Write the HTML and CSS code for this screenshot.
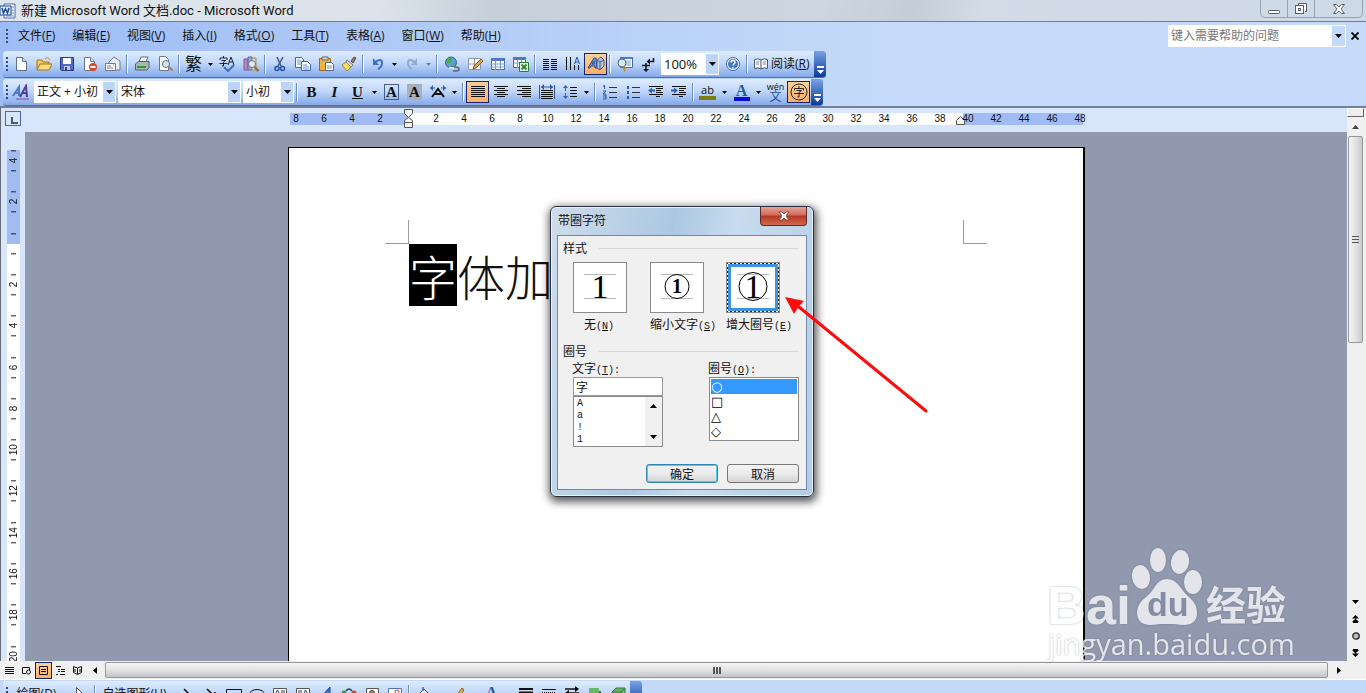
FILE: index.html
```
<!DOCTYPE html>
<html lang="zh-CN">
<head>
  <meta charset="UTF-8">
  <meta name="viewport" content="width=device-width, initial-scale=1.0">
  <title>新建 Microsoft Word 文档.doc - Microsoft Word</title>
  <link rel="stylesheet" href="styles.css">
</head>
<body>
  <svg class="defs" aria-hidden="true">
    <symbol id="caret" viewBox="0 0 7 4"><path d="M0 0h7L3.500 4z"/></symbol>
    <symbol id="chevron" viewBox="0 0 8 8"><path d="M1 0h7v2H1zM1 4h7L4.500 8z" fill="#fff"/></symbol>
  </svg>

  <header class="titlebar">
    <svg class="app-icon" width="16" height="16" viewBox="0 0 16 16"><path d="M4 1h11v14H4z" fill="#fff" stroke="#4a6da8"/><path d="M11 4h3M11 7h3M11 10h3M6 13h8" stroke="#6a8cc5"/><path d="M0 3h11v9H0z" fill="#dce8fa" stroke="#1d4a95"/><path d="M2 5l1.500 5L5.500 6l2 4L9 5" fill="none" stroke="#1d4a95" stroke-width="1.500"/></svg>
    <h1>新建 Microsoft Word 文档.doc - Microsoft Word</h1>
    <div class="win-buttons">
      <button aria-label="最小化"><svg width="14" height="14" viewBox="0 0 14 14"><rect x="1.500" y="8.500" width="11" height="3" rx="1" fill="#fff" stroke="#555e6b"/></svg></button>
      <button aria-label="还原"><svg width="14" height="14" viewBox="0 0 14 14"><path d="M4.500 3V1.500h8v8H11" fill="#fff" stroke="#555e6b"/><rect x="1.500" y="3.500" width="8" height="8" fill="#fff" stroke="#555e6b"/><rect x="4.500" y="6.500" width="2" height="2" fill="none" stroke="#555e6b"/></svg></button>
      <button class="win-close" aria-label="关闭"><svg width="14" height="14" viewBox="0 0 14 14"><path d="M1.500 2.500h3L7 5l2.500-2.500h3L9 7l3.500 4.500h-3L7 9l-2.500 2.500h-3L5 7z" fill="#fff" stroke="#555e6b"/></svg></button>
    </div>
  </header>

  <nav class="menubar">
    <span class="grip"></span>
    <button>文件(<u>F</u>)</button>
    <button>编辑(<u>E</u>)</button>
    <button>视图(<u>V</u>)</button>
    <button>插入(<u>I</u>)</button>
    <button>格式(<u>O</u>)</button>
    <button>工具(<u>T</u>)</button>
    <button>表格(<u>A</u>)</button>
    <button>窗口(<u>W</u>)</button>
    <button>帮助(<u>H</u>)</button>
    <div class="help-box">
      <input type="text" placeholder="键入需要帮助的问题" aria-label="键入需要帮助的问题">
      <button class="help-drop" aria-label="展开"><svg width="7" height="4"><use href="#caret"/></svg></button>
    </div>
    <button class="doc-close" aria-label="关闭窗口"><svg width="8" height="8" viewBox="0 0 8 8"><path d="M.5.5l7 7M7.500.5l-7 7" stroke="#000" stroke-width="1.800"/></svg></button>
  </nav>

  <section class="toolbars">
    <!-- 常用 -->
    <div class="toolbar">
      <span class="grip"></span>
      <button class="tb" aria-label="新建"><svg width="16" height="16" viewBox="0 0 16 16"><path d="M3.500 1.500h6l4 4v9h-10z" fill="#fff" stroke="#5b6f97"/><path d="M9.500 1.500v4h4" fill="#cfdcf2" stroke="#5b6f97"/></svg></button>
      <button class="tb" aria-label="打开"><svg width="16" height="16" viewBox="0 0 16 16"><path d="M1 14V4h5l1 2h6v3" fill="#f5c95c" stroke="#a67516"/><path d="M1 14l3-6h12l-3 6z" fill="#fbdc7d" stroke="#a67516"/><path d="M9 3q3-3 5 1" fill="none" stroke="#c58a1c"/></svg></button>
      <button class="tb" aria-label="保存"><svg width="16" height="16" viewBox="0 0 16 16"><path d="M1.500 1.500h13v13h-12l-1-1z" fill="#5566c4" stroke="#2c3788"/><path d="M4 2h8v6H4z" fill="#fff"/><path d="M5 10h6v4H5z" fill="#c8cee8"/><path d="M6 11h2v3H6z" fill="#2c3788"/></svg></button>
      <button class="tb" aria-label="权限"><svg width="16" height="16" viewBox="0 0 16 16"><path d="M2.500 1.500h6l4 4v9h-10z" fill="#fff" stroke="#6b7797"/><path d="M8.500 1.500v4h4" fill="#d5ddec" stroke="#6b7797"/><circle cx="11" cy="11" r="4" fill="#d94a28"/><path d="M8.500 11h5" stroke="#fff" stroke-width="2"/></svg></button>
      <button class="tb" aria-label="电子邮件"><svg width="16" height="16" viewBox="0 0 16 16"><path d="M4 6l5-5 6 4v9H4z" fill="#e8ecf4" stroke="#6f7b94"/><path d="M.5 7.500h10v7H.5z" fill="#fff" stroke="#6f7b94"/><path d="M2 10h4M2 12h6M8 9h1" stroke="#6f7b94"/></svg></button>
      <span class="sep"></span>
      <button class="tb" aria-label="打印"><svg width="16" height="16" viewBox="0 0 16 16"><path d="M5 6l2-5h7l-2 5z" fill="#fff" stroke="#56677d"/><path d="M1.500 8l3-2.500h10.500v6l-2 2.500H1.500z" fill="#a9b8b6" stroke="#4e605e"/><path d="M3 11h9" stroke="#2c9a35" stroke-width="2"/></svg></button>
      <button class="tb" aria-label="打印预览"><svg width="16" height="16" viewBox="0 0 16 16"><path d="M2.500.5h6l3 3v11h-9z" fill="#fff" stroke="#6b7797"/><circle cx="9" cy="8" r="3.500" fill="#cfe2f7" stroke="#66718a"/><path d="M11.500 10.500l4 4" stroke="#b9812f" stroke-width="2"/></svg></button>
      <span class="sep"></span>
      <button class="tb fan" aria-label="中文简繁转换">繁</button>
      <button class="drop" aria-label="更多"><svg width="5" height="3"><use href="#caret"/></svg></button>
      <button class="tb" aria-label="拼写和语法"><svg width="18" height="16" viewBox="0 0 18 16"><path d="M1 4V2h7v2M4.500 0v2M2.500 4.500h4L4.500 6v4H3M.5 7.500h8M9 9l3-8 3 8M10 6h4" fill="none" stroke="#20242e"/><path d="M5 11l4 4 6-6" fill="none" stroke="#3b6fc4" stroke-width="2"/></svg></button>
      <button class="tb" aria-label="信息检索"><svg width="16" height="16" viewBox="0 0 16 16"><path d="M1 3h4v11H1z" fill="#b987bd" stroke="#7c5990"/><path d="M5 1h4v13H5z" fill="#93a9e0" stroke="#5a6aa4"/><path d="M9 2h4v12H9z" fill="#ead9a0" stroke="#a08b50"/><circle cx="9" cy="8" r="3.500" fill="#e0ecfa" stroke="#66718a"/><path d="M11.500 11l4 4" stroke="#98652a" stroke-width="2"/></svg></button>
      <span class="sep"></span>
      <button class="tb" aria-label="剪切"><svg width="16" height="16" viewBox="0 0 16 16"><path d="M5 1l4 9M11 1L6 10" stroke="#3f5688" stroke-width="1.500"/><circle cx="5" cy="12.500" r="2" fill="none" stroke="#2451a5" stroke-width="1.500"/><circle cx="10.500" cy="12.500" r="2" fill="none" stroke="#2451a5" stroke-width="1.500"/></svg></button>
      <button class="tb" aria-label="复制"><svg width="16" height="16" viewBox="0 0 16 16"><path d="M.5 1.500h6l2 2v8h-8z" fill="#fff" stroke="#3e66b0"/><path d="M6.500 5.500h6l3 3v6h-9z" fill="#fff" stroke="#3e66b0"/><path d="M2 4h4M2 6h4M2 8h4M8 9h4M8 11h6M8 13h6" stroke="#6f92cf"/></svg></button>
      <button class="tb" aria-label="粘贴"><svg width="16" height="16" viewBox="0 0 16 16"><path d="M1.500 2.500h11v12h-11z" fill="#f0b33c" stroke="#9a6914"/><path d="M4 1h6v3H4z" fill="#d4d8e0" stroke="#666"/><path d="M7.500 6.500h6l2 2v6h-8z" fill="#fff" stroke="#53688f"/><path d="M9 10h5M9 12h5" stroke="#7b93bd"/></svg></button>
      <button class="tb" aria-label="格式刷"><svg width="16" height="16" viewBox="0 0 16 16"><path d="M10 5l3-4 2 1-3 5z" fill="#9a7b55" stroke="#5d4a35"/><path d="M6 4l6 5-2 2-5-5z" fill="#d5dbe8" stroke="#6d7890"/><path d="M5 6l5 5-4 4-5-6z" fill="#f4dd70" stroke="#a98a24"/></svg></button>
      <span class="sep"></span>
      <button class="tb" aria-label="撤消"><svg width="16" height="16" viewBox="0 0 16 16"><path d="M4 7q8-6 8 0 0 4-4 6" fill="none" stroke="#3c6fc9" stroke-width="2"/><path d="M3 2v7h6z" fill="#3c6fc9"/></svg></button>
      <button class="drop" aria-label="更多"><svg width="5" height="3"><use href="#caret"/></svg></button>
      <button class="tb" aria-label="恢复"><svg width="16" height="16" viewBox="0 0 16 16"><path d="M12 7q-8-6-8 0 0 4 4 6" fill="none" stroke="#93a9cf" stroke-width="2"/><path d="M13 2v7H7z" fill="#93a9cf"/></svg></button>
      <button class="drop dim" aria-label="更多"><svg width="5" height="3"><use href="#caret"/></svg></button>
      <span class="sep"></span>
      <button class="tb" aria-label="插入超链接"><svg width="16" height="16" viewBox="0 0 16 16"><circle cx="7" cy="6.500" r="5.500" fill="#5a9fdb" stroke="#32648e"/><path d="M4 2q4-1 4 2t-3 3-3-2zM8 8l4-2-1 4z" fill="#4caa4f"/><path d="M7 11h5q3 0 3 2t-3 2H9" fill="none" stroke="#5c6577" stroke-width="1.500"/><path d="M5 12h5" stroke="#dde3ee" stroke-width="2"/></svg></button>
      <button class="tb" aria-label="表格和边框"><svg width="16" height="16" viewBox="0 0 16 16"><path d="M1.500 2.500h12v11h-12z" fill="#fff" stroke="#8c97ae"/><path d="M1 8h13M7.500 2v12" stroke="#8c97ae"/><path d="M6 13l1-3 7-7 2 2-7 7z" fill="#e8a349" stroke="#8b5c20"/></svg></button>
      <button class="tb" aria-label="插入表格"><svg width="16" height="16" viewBox="0 0 16 16"><path d="M1.500 2.500h13v11h-13z" fill="#fff" stroke="#48689f"/><path d="M1 2h14v3H1z" fill="#4f7ac2"/><path d="M1 8h14M1 11h14M5.500 5v9M10.500 5v9" stroke="#7f9bca"/></svg></button>
      <button class="tb" aria-label="插入 Excel 工作表"><svg width="16" height="16" viewBox="0 0 16 16"><path d="M.5 1.500h12v10H.5z" fill="#fff" stroke="#48689f"/><path d="M0 1h13v3H0z" fill="#4f7ac2"/><path d="M1 7h11M4.500 4v8M8.500 4v8" stroke="#7f9bca"/><path d="M6.500 6.500h9v9h-9z" fill="#e6f3e3" stroke="#2b7a35"/><path d="M8.500 8.500l5 5M13.500 8.500l-5 5" stroke="#2b8a35" stroke-width="2"/></svg></button>
      <span class="sep"></span>
      <button class="tb" aria-label="分栏"><svg width="16" height="16" viewBox="0 0 16 16"><path d="M1 3.500h6M1 5.500h6M1 7.500h6M1 9.500h6M1 11.500h6M1 13.500h6M9 3.500h6M9 5.500h6M9 7.500h6M9 9.500h6M9 11.500h6M9 13.500h6" stroke="#111"/></svg></button>
      <button class="tb" aria-label="更改文字方向"><svg width="16" height="16" viewBox="0 0 16 16"><path d="M1.500 1v13M5.500 1v13M9.500 9v5M13.500 9v5" stroke="#111"/><path d="M9.500 8l2.500-7 2.500 7M10 6h4" fill="none" stroke="#2d5aa6"/></svg></button>
      <button class="tb active" aria-label="绘图"><svg width="18" height="16" viewBox="0 0 18 16"><path d="M1 12L7 2h2l1 10H8v-2H4l-1 2zM5 8h2V5z" fill="#6f9be0" stroke="#2c4a8c"/><path d="M10 4l4-3 3 3v6l-4 4-3-2z" fill="#b5c0dd" stroke="#4b5b86"/><path d="M10 4l3 2 4-2M13 6v7" fill="none" stroke="#4b5b86"/></svg></button>
      <span class="sep"></span>
      <button class="tb" aria-label="文档结构图"><svg width="16" height="16" viewBox="0 0 16 16"><path d="M3.500 1.500h12v10h-12z" fill="#fff" stroke="#48689f"/><path d="M3 1h13v2H3z" fill="#4f7ac2"/><path d="M9 5h5M9 7h5M9 9h5" stroke="#7f9bca"/><circle cx="5" cy="7" r="4" fill="#d6eaf5" stroke="#567"/><path d="M6 10l2 5" stroke="#b98b2f" stroke-width="2"/></svg></button>
      <button class="tb" aria-label="显示/隐藏编辑标记"><svg width="16" height="16" viewBox="0 0 16 16"><path d="M13.500 2v3.500H9M2 9.500h8M6 7v8" fill="none" stroke="#111" stroke-width="1.500"/><path d="M10 2.500v6L6.500 5.500zM3 13h6l-3 3z" fill="#111"/></svg></button>
      <span class="combo zoom">
        <select aria-label="显示比例"><option>100%</option></select>
        <span class="combo-arrow"><svg width="7" height="4"><use href="#caret"/></svg></span>
      </span>
      <button class="tb" aria-label="帮助"><svg width="16" height="16" viewBox="0 0 16 16"><circle cx="8" cy="8" r="6.500" fill="#fff" stroke="#33619f"/><circle cx="8" cy="8" r="5" fill="#3f77c9"/><path d="M6 6.500q0-2 2-2t2 1.800q0 1-1 1.700t-1 1.500M8 11v1.500" fill="none" stroke="#fff" stroke-width="1.500"/></svg></button>
      <span class="sep"></span>
      <button class="tb-read"><svg width="16" height="16" viewBox="0 0 16 16"><path d="M8 4Q5 2 1.500 3.500v9Q5 11 8 13q3-2 6.500-.5v-9Q11 2 8 4v9" fill="#f3f6fc" stroke="#4b5870"/><path d="M3 6h3M3 8h3M10 6h3M10 8h3" stroke="#8a93a8"/></svg><span>阅读(<u>R</u>)</span></button>
      <button class="tb-end" aria-label="工具栏选项"><svg width="8" height="8"><use href="#chevron"/></svg></button>
    </div>

    <!-- 格式 -->
    <div class="toolbar">
      <span class="grip"></span>
      <button class="tb" aria-label="格式窗格"><svg width="18" height="16" viewBox="0 0 18 16"><path d="M1 12l6-9v9M3 9h4" fill="none" stroke="#4d78c8" stroke-width="2"/><path d="M8 13l6-11 1 11M10 9h5" fill="none" stroke="#4d3f9c" stroke-width="2"/><path d="M4 15h13" stroke="#8e4fa0"/></svg></button>
      <span class="combo style">
        <select aria-label="样式"><option>正文 + 小初</option></select>
        <span class="combo-arrow"><svg width="7" height="4"><use href="#caret"/></svg></span>
      </span>
      <span class="combo font">
        <select aria-label="字体"><option>宋体</option></select>
        <span class="combo-arrow"><svg width="7" height="4"><use href="#caret"/></svg></span>
      </span>
      <span class="combo size">
        <select aria-label="字号"><option>小初</option></select>
        <span class="combo-arrow"><svg width="7" height="4"><use href="#caret"/></svg></span>
      </span>
      <span class="sep"></span>
      <button class="tb letter">B</button>
      <button class="tb letter italic">I</button>
      <button class="tb letter underline">U</button>
      <button class="drop" aria-label="更多"><svg width="5" height="3"><use href="#caret"/></svg></button>
      <button class="tb letter"><span class="boxed">A</span></button>
      <button class="tb letter"><span class="shaded">A</span></button>
      <button class="tb" aria-label="字符缩放"><svg width="16" height="16" viewBox="0 0 16 16"><path d="M2 13l6-8 6 8M5 10h6" fill="none" stroke="#111" stroke-width="2"/><path d="M0 4h5M11 4h5" stroke="#2d62b5"/><path d="M3 1L0 4l3 3zM13 1l3 3-3 3z" fill="#2d62b5"/></svg></button>
      <button class="drop" aria-label="更多"><svg width="5" height="3"><use href="#caret"/></svg></button>
      <span class="sep"></span>
      <button class="tb active" aria-label="两端对齐"><svg width="16" height="16" viewBox="0 0 16 16"><path d="M1 2.500h14M1 4.500h14M1 6.500h14M1 8.500h14M1 10.500h14M1 12.500h14" stroke="#111"/></svg></button>
      <button class="tb" aria-label="居中"><svg width="16" height="16" viewBox="0 0 16 16"><path d="M1 2.500h14M4 4.500h8M1 6.500h14M4 8.500h8M1 10.500h14M4 12.500h8" stroke="#111"/></svg></button>
      <button class="tb" aria-label="右对齐"><svg width="16" height="16" viewBox="0 0 16 16"><path d="M1 2.500h14M6 4.500h9M1 6.500h14M6 8.500h9M1 10.500h14M6 12.500h9" stroke="#111"/></svg></button>
      <button class="tb" aria-label="分散对齐"><svg width="16" height="16" viewBox="0 0 16 16"><path d="M.5 1v14M15.500 1v14M2 3h12" stroke="#2d5aa6"/><path d="M5 0L2 3l3 3zM11 0l3 3-3 3z" fill="#2d5aa6"/><path d="M2 6.500h12M2 8.500h12M2 10.500h12M2 12.500h12M2 14.500h12" stroke="#111"/></svg></button>
      <button class="tb" aria-label="行距"><svg width="16" height="16" viewBox="0 0 16 16"><path d="M3.500 3v4M3.500 9v4" stroke="#2d62b5"/><path d="M1 4l2.500-3L6 4zM1 12l2.500 3L6 12z" fill="#2d62b5"/><path d="M8 3.500h7M8 6.500h7M8 9.500h7M8 12.500h7" stroke="#111"/></svg></button>
      <button class="drop" aria-label="更多"><svg width="5" height="3"><use href="#caret"/></svg></button>
      <span class="sep"></span>
      <button class="tb" aria-label="编号"><svg width="16" height="16" viewBox="0 0 16 16"><path d="M2.500 1v4M1 2h1M1 7h3l-3 3h3M1 11h3v4H1M1 13h3" fill="none" stroke="#2d5aa6"/><path d="M7 3.500h8M7 8.500h8M7 13.500h8" stroke="#333"/></svg></button>
      <button class="tb" aria-label="项目符号"><svg width="16" height="16" viewBox="0 0 16 16"><path d="M2 2h2v3H2zM2 7h2v3H2zM2 12h2v3H2z" fill="#2d5aa6"/><path d="M7 3.500h8M7 8.500h8M7 13.500h8" stroke="#333"/></svg></button>
      <button class="tb" aria-label="减少缩进量"><svg width="16" height="16" viewBox="0 0 16 16"><path d="M1 2.500h14M8 4.500h7M8 6.500h5M8 8.500h7M1 10.500h14M8 12.500h4" stroke="#111"/><path d="M3 6.500h4" stroke="#2d62b5" stroke-width="2"/><path d="M4 3.500v6L0 6.500z" fill="#2d62b5"/></svg></button>
      <button class="tb" aria-label="增加缩进量"><svg width="16" height="16" viewBox="0 0 16 16"><path d="M1 2.500h14M8 4.500h7M8 6.500h5M8 8.500h7M1 10.500h14M8 12.500h4" stroke="#111"/><path d="M0 6.500h4" stroke="#2d62b5" stroke-width="2"/><path d="M3 3.500v6l4-3z" fill="#2d62b5"/></svg></button>
      <span class="sep"></span>
      <button class="tb marker"><span>ab</span></button>
      <button class="drop" aria-label="更多"><svg width="5" height="3"><use href="#caret"/></svg></button>
      <button class="tb font-color"><span>A</span></button>
      <button class="drop" aria-label="更多"><svg width="5" height="3"><use href="#caret"/></svg></button>
      <button class="tb pinyin"><span>wén</span><span class="wen">文</span></button>
      <button class="tb active" aria-label="带圈字符"><svg width="18" height="18" viewBox="0 0 18 18"><circle cx="9" cy="9" r="8" fill="none" stroke="#222"/><path d="M9 3v2M4.500 7.500v-2h9v2M6.500 7.500h5L9 9.500V14H7.500M4 10.500h10" fill="none" stroke="#222"/></svg></button>
      <button class="tb-end" aria-label="工具栏选项"><svg width="8" height="8"><use href="#chevron"/></svg></button>
    </div>
  </section>

  <main class="workspace">
    <div class="tab-corner"><span class="tab-mark"></span></div>
    <div class="ruler-h">
      <div class="ruler-scale">
        <span>8</span><span>6</span><span>4</span><span>2</span><span class="zero"><svg width="9" height="19" viewBox="0 0 9 19"><path d="M.5.5h8v4l-4 4-4-4zM.5 13.500v-2l4-3 4 3v2zM.5 13.500h8v5h-8z" fill="#f4f4f4" stroke="#555"/></svg></span>
        <span>2</span><span>4</span><span>6</span><span>8</span><span>10</span><span>12</span><span>14</span><span>16</span><span>18</span><span>20</span><span>22</span><span>24</span><span>26</span><span>28</span><span>30</span><span>32</span><span>34</span><span>36</span><span>38</span><span class="right-indent"><svg width="9" height="9" viewBox="0 0 9 9"><path d="M.5 8.500v-4l4-4 4 4v4z" fill="#f4f4f4" stroke="#555"/></svg>40</span><span>42</span><span>44</span><span>46</span><span>48</span>
      </div>
    </div>
    <div class="ruler-v">
      <div class="ruler-v-scale">
        <span>4</span><span>2</span><span></span><span>2</span><span>4</span><span>6</span><span>8</span><span>10</span><span>12</span><span>14</span><span>16</span><span>18</span><span>20</span>
      </div>
    </div>
    <div class="canvas">
      <article class="page">
        <div class="crop-marks"><span class="crop-left"></span><span class="crop-right"></span></div>
        <p class="doc-text"><mark>字</mark>体加</p>
      </article>
    </div>
    <div class="scroll-v">
      <span class="split"></span>
      <button aria-label="向上"><svg width="7" height="4" viewBox="0 0 7 4"><path d="M0 4h7L3.500 0z" fill="#444"/></svg></button>
      <span class="thumb-v"><i></i></span>
      <div class="scroll-nav">
        <button aria-label="向下"><svg width="7" height="4"><use href="#caret"/></svg></button>
        <button aria-label="前一页"><svg width="7" height="8" viewBox="0 0 7 8"><path d="M0 3.500h7L3.500 0zM0 7h7L3.500 3.500zM1 7h5v1H1z"/></svg></button>
        <button aria-label="选择浏览对象"><svg width="8" height="8" viewBox="0 0 8 8"><circle cx="4" cy="4" r="3.200" fill="#bbb" stroke="#222" stroke-width="1.300"/></svg></button>
        <button aria-label="下一页"><svg width="7" height="8" viewBox="0 0 7 8"><path d="M1 0h5v1H1zM0 1h7L3.500 4.500zM0 4.500h7L3.500 8z"/></svg></button>
      </div>
    </div>
  </main>

  <div class="scroll-h">
    <button class="view" aria-label="普通视图"><svg width="11" height="11" viewBox="0 0 11 11"><path d="M1 2.500h9M1 4.500h9M1 6.500h9M1 8.500h9" stroke="#111"/></svg></button>
    <button class="view" aria-label="Web 版式视图"><svg width="11" height="11" viewBox="0 0 11 11"><path d="M5 8.500H1.500v-6h7V5" fill="none" stroke="#111"/><circle cx="7.500" cy="7" r="2" fill="none" stroke="#111"/></svg></button>
    <button class="view active" aria-label="页面视图"><svg width="11" height="11" viewBox="0 0 11 11"><path d="M1.500 1.500h8v8h-8zM3 4.500h5M3 6.500h5" fill="none" stroke="#111"/></svg></button>
    <button class="view" aria-label="大纲视图"><svg width="11" height="11" viewBox="0 0 11 11"><path d="M1 1.500h5M3 4.500h2M6 4.500h4M3 6.500h2M6 6.500h4M1 9.500h2M5 9.500h5" stroke="#111"/></svg></button>
    <button class="view" aria-label="阅读版式"><svg width="11" height="11" viewBox="0 0 11 11"><path d="M5.500 3L1.500 1.500v6l4 2 4-2v-6zM5.500 3v6M3 4v3M8 4v3" fill="none" stroke="#111"/></svg></button>
    <button class="view" aria-label="向左"><svg width="4" height="7" viewBox="0 0 4 7"><path d="M4 0v7L0 3.500z"/></svg></button>
    <span class="thumb-h"><i></i></span>
    <button class="view" aria-label="向右"><svg width="4" height="7" viewBox="0 0 4 7"><path d="M0 0v7l4-3.500z"/></svg></button>
  </div>

  <!-- 绘图 -->
  <footer class="drawbar">
    <div class="toolbar">
      <span class="grip"></span>
      <button class="draw-menu"><span>绘图(<u>D</u>)</span><svg width="5" height="3"><use href="#caret"/></svg></button>
      <button class="tb" aria-label="选择对象"><svg width="16" height="16" viewBox="0 0 16 16"><path d="M3.500 1.500l8 8h-5l-3 3z" fill="#fff" stroke="#556"/></svg></button>
      <span class="sep"></span>
      <button class="draw-menu auto"><span>自选图形(<u>U</u>)</span><svg width="5" height="3"><use href="#caret"/></svg></button>
      <button class="tb" aria-label="直线"><svg width="16" height="16" viewBox="0 0 16 16"><path d="M4 3l10 10" stroke="#111" stroke-width="1.500"/></svg></button>
      <button class="tb" aria-label="箭头"><svg width="16" height="16" viewBox="0 0 16 16"><path d="M4 3l8 8M12 6v5H7" fill="none" stroke="#111" stroke-width="1.500"/></svg></button>
      <button class="tb" aria-label="矩形"><svg width="16" height="16" viewBox="0 0 16 16"><path d="M.5 3.500h15v10H.5z" fill="none" stroke="#111"/></svg></button>
      <button class="tb" aria-label="椭圆"><svg width="16" height="16" viewBox="0 0 16 16"><ellipse cx="8" cy="8.500" rx="7.500" ry="5" fill="none" stroke="#111"/></svg></button>
      <button class="tb" aria-label="文本框"><svg width="16" height="16" viewBox="0 0 16 16"><path d="M1.500 2.500h13v11h-13z" fill="#fff" stroke="#555"/><path d="M3 9l2.500-5L8 9M9 5h4M9 7h4" fill="none" stroke="#246"/></svg></button>
      <button class="tb" aria-label="竖排文本框"><svg width="16" height="16" viewBox="0 0 16 16"><path d="M1.500 2.500h13v11h-13z" fill="#fff" stroke="#555"/><path d="M8 9l2.500-5L13 9M4 4v8M6 4v8" fill="none" stroke="#246"/></svg></button>
      <button class="tb" aria-label="艺术字"><svg width="16" height="16" viewBox="0 0 16 16"><path d="M2 12L12 1v13h-3v-3H5z" fill="#3f71c9" stroke="#1f4690"/></svg></button>
      <button class="tb" aria-label="组织结构图"><svg width="16" height="16" viewBox="0 0 16 16"><path d="M5 5q3-4 6 0" fill="none" stroke="#345" stroke-width="1.500"/><circle cx="3" cy="7" r="2.500" fill="#389648"/><circle cx="13" cy="7" r="2.500" fill="#c04c38"/></svg></button>
      <button class="tb" aria-label="剪贴画"><svg width="16" height="16" viewBox="0 0 16 16"><path d="M2.500 2.500h12v11h-12z" fill="#fff" stroke="#555"/><circle cx="8" cy="7" r="2.500" fill="#9a8b6a" stroke="#543"/></svg></button>
      <button class="tb" aria-label="图片"><svg width="16" height="16" viewBox="0 0 16 16"><path d="M1.500 2.500h13v11h-13z" fill="#fff" stroke="#5374b5"/><circle cx="10" cy="6" r="2" fill="none" stroke="#c33"/><path d="M3 12l4-4 3 4z" fill="#c33"/></svg></button>
      <span class="sep"></span>
      <button class="tb" aria-label="填充颜色"><svg width="16" height="16" viewBox="0 0 16 16"><path d="M3 8l5-5 5 5-5 5z" fill="#e6ecf8" stroke="#445"/><path d="M7 5V1M13 8l2 4" stroke="#3567b8" stroke-width="1.500"/></svg></button>
      <button class="drop" aria-label="更多"><svg width="5" height="3"><use href="#caret"/></svg></button>
      <button class="tb" aria-label="线条颜色"><svg width="16" height="16" viewBox="0 0 16 16"><path d="M6 10l6-8 2 2-6 8z" fill="#e9b947" stroke="#765b20"/><path d="M2 12q2-4 5-1" fill="none" stroke="#36a" stroke-width="2"/></svg></button>
      <button class="drop" aria-label="更多"><svg width="5" height="3"><use href="#caret"/></svg></button>
      <button class="tb font-color"><span>A</span></button>
      <button class="drop" aria-label="更多"><svg width="5" height="3"><use href="#caret"/></svg></button>
      <button class="tb" aria-label="线型"><svg width="16" height="16" viewBox="0 0 16 16"><path d="M1 3h14" stroke="#111" stroke-width="2"/><path d="M1 7h14" stroke="#111" stroke-width="3"/></svg></button>
      <button class="tb" aria-label="虚线线型"><svg width="16" height="16" viewBox="0 0 16 16"><path d="M1 3.500h14" stroke="#111"/><path d="M1 6.500h14" stroke="#111" stroke-dasharray="1 1"/></svg></button>
      <button class="tb" aria-label="箭头样式"><svg width="16" height="16" viewBox="0 0 16 16"><path d="M1 3h11M4 7h11" stroke="#111" stroke-width="1.500"/><path d="M11 0l4 3-4 3zM5 4L1 7l4 3z"/></svg></button>
      <button class="tb" aria-label="阴影样式"><svg width="16" height="16" viewBox="0 0 16 16"><path d="M5 5h9v9H5z" fill="#456"/><path d="M2 2h10v10H2z" fill="#66b868"/></svg></button>
      <button class="tb" aria-label="三维效果样式"><svg width="16" height="16" viewBox="0 0 16 16"><path d="M2 6l4-4h9v8l-4 4H2z" fill="#66b868" stroke="#3a753e"/><path d="M2 6h9v8M11 6l4-4" fill="none" stroke="#3a753e"/></svg></button>
      <button class="tb-end" aria-label="工具栏选项"></button>
    </div>
  </footer>

  <!-- 带圈字符 -->
  <form class="dialog" role="dialog" aria-labelledby="dialog-title">
    <div class="dialog-title">
      <h2 id="dialog-title">带圈字符</h2>
      <button type="button" class="dialog-close" aria-label="关闭"><svg width="12" height="10" viewBox="0 0 12 10"><path d="M1 1h3l2 2 2-2h3L8 5l3 4H8L6 7 4 9H1l3-4z" fill="#fff" stroke="#6d3a36" stroke-width=".8"/></svg></button>
    </div>
    <div class="dialog-body">
      <h3 class="group">样式</h3>
      <div class="styles">
        <div class="choice">
          <input type="radio" name="style" id="style-none">
          <label for="style-none"><svg width="54" height="51" viewBox="0 0 54 51"><path d="M11 12.500h32M11 36.500h32" stroke="#bbb"/><text x="27" y="36" class="num-large">1</text></svg></label>
          <span class="caption none">无<span class="key">(<u>N</u>)</span></span>
        </div>
        <div class="choice">
          <input type="radio" name="style" id="style-shrink">
          <label for="style-shrink"><svg width="54" height="51" viewBox="0 0 54 51"><path d="M11 12.500h32M11 36.500h32" stroke="#bbb"/><circle cx="27" cy="24.500" r="12" fill="#fff" stroke="#000"/><text x="27" y="31" class="num-small">1</text></svg></label>
          <span class="caption">缩小文字<span class="key">(<u>S</u>)</span></span>
        </div>
        <div class="choice">
          <input type="radio" name="style" id="style-enlarge" checked>
          <label for="style-enlarge"><svg width="54" height="51" viewBox="0 0 54 51"><path d="M11 12.500h32M11 36.500h32" stroke="#bbb"/><circle cx="27" cy="24.500" r="14" fill="none" stroke="#000"/><text x="27" y="36" class="num-large">1</text></svg></label>
          <span class="caption">增大圈号<span class="key">(<u>E</u>)</span></span>
        </div>
      </div>
      <h3 class="group">圈号</h3>
      <div class="lists">
        <div class="field">
          <label for="char">文字<span class="key">(<u>T</u>):</span></label>
          <input type="text" id="char" value="字">
          <div class="char-list">
            <ul role="listbox" aria-label="文字">
              <li role="option">A</li>
              <li role="option">a</li>
              <li role="option">!</li>
              <li role="option">1</li>
            </ul>
            <div class="mini-scroll">
              <svg width="7" height="4" viewBox="0 0 7 4"><path d="M0 4h7L3.500 0z"/></svg>
              <svg width="7" height="4"><use href="#caret"/></svg>
            </div>
          </div>
        </div>
        <div class="field">
          <span id="ring-label" class="field-label">圈号<span class="key">(<u>O</u>):</span></span>
          <ul class="ring-list" role="listbox" aria-labelledby="ring-label">
            <li role="option" aria-selected="true" class="selected">○</li>
            <li role="option">□</li>
            <li role="option">△</li>
            <li role="option">◇</li>
          </ul>
        </div>
      </div>
      <div class="actions">
        <button type="button" class="btn primary">确定</button>
        <button type="button" class="btn">取消</button>
      </div>
    </div>
  </form>

  <svg class="pointer" width="150" height="124" viewBox="0 0 150 124" aria-hidden="true">
    <path d="M143 117L16 13" stroke="#fb0d0d" stroke-width="3" stroke-linecap="round"/>
    <path d="M2 3l19 4-5 5-5 8z" fill="#fb0d0d"/>
  </svg>

  <svg class="watermark" width="250" height="122" viewBox="0 0 250 122">
    <text x="2" y="82" class="wm-bai">Bai</text>
    <g class="wm-paw">
      <ellipse cx="96" cy="35" rx="9" ry="12" transform="rotate(-10 96 35)"/>
      <ellipse cx="113" cy="18" rx="8" ry="12"/>
      <ellipse cx="135" cy="20" rx="9" ry="12" transform="rotate(10 135 20)"/>
      <ellipse cx="148" cy="40" rx="9" ry="12"/>
      <path d="M122 37q8 0 14 9 3 5 9 10 7 6 7 15 0 11-12 12-5 0-11-1h-14q-6 1-11 1-12-1-12-13 0-8 9-15 5-4 8-9 5-9 13-9z"/>
    </g>
    <text x="102" y="74" class="wm-du">du</text>
    <text x="161" y="78" class="wm-cn">经验</text>
    <text x="3" y="113" class="wm-url">jingyan.baidu.com</text>
  </svg>
</body>
</html>
```
FILE: styles.css
```
* {
  box-sizing: border-box;
}
body {
  margin: 0;
  height: 100vh;
  display: flex;
  flex-direction: column;
  position: relative;
  overflow: hidden;
  background: #c3d9f8;
  color: #111;
  font: 12px/16px "Open Sans", "Noto Sans CJK SC", sans-serif;
}
button, input, select {
  font: inherit;
  color: inherit;
}
button {
  display: flex;
  align-items: center;
  justify-content: center;
  padding: 0;
  border: none;
  background: none;
  white-space: nowrap;
}
h1, h2, h3, p, ul {
  margin: 0;
  padding: 0;
  font-weight: normal;
}
ul {
  list-style: none;
}
svg {
  display: block;
  flex: none;
}
.defs {
  display: none;
}

/* title bar */
.titlebar {
  flex: none;
  display: flex;
  align-items: center;
  height: 22px;
  border-bottom: 1px solid #6f7e96;
  background: linear-gradient(100deg, #dfe5ec 0%, #dbe2ea 28%, #c6d0db 36%, #cdd6e0 60%, #c4ced9 67%, #d3dce7 72%, #cdd9e6 100%);
}
.titlebar h1 {
  flex: 1;
  padding-left: 5px;
  font: 13px/20px Roboto, "Noto Sans CJK SC", sans-serif;
}
.win-buttons {
  display: flex;
  align-self: flex-start;
  height: 18px;
  margin-right: 3px;
  border: 1px solid #98a3b2;
  border-top: none;
  border-radius: 0 0 5px 5px;
}
.win-buttons button {
  width: 27px;
  border-right: 1px solid #98a3b2;
}
.win-buttons .win-close {
  width: 47px;
  border-right: none;
}

/* menu */
.menubar {
  flex: none;
  display: flex;
  align-items: center;
  gap: 17px;
  height: 28px;
  padding: 0 6px;
  background: linear-gradient(90deg, #9dbcf5, #b9d1f8 45%, #c4daf8 65%);
}
.menubar .grip {
  margin-right: -8px;
}
.grip {
  flex: none;
  width: 3px;
  height: 15px;
  background: repeating-linear-gradient(#2d4a86 0 2px, transparent 2px 4px);
  clip-path: inset(0 1px 0 0);
}
.help-box {
  display: flex;
  width: 178px;
  height: 22px;
  margin-left: auto;
  border: 1px solid #fff;
  background: #fff;
}
.help-box input {
  flex: 1;
  min-width: 0;
  padding: 0 2px;
  border: none;
  outline: none;
  background: none;
}
.help-box input::placeholder {
  color: #777;
  opacity: 1;
}
.help-drop {
  width: 13px;
  background: #c4daf8;
}
.menubar .doc-close {
  margin: 0 1px 0 -12px;
}

/* toolbars */
.toolbars {
  flex: none;
  display: flex;
  flex-direction: column;
  align-items: flex-start;
  gap: 2px;
  padding: 1px 0 1px 3px;
  border-bottom: 2px solid #71809c;
  background: linear-gradient(90deg, #9dbcf5, #b9d1f8 45%, #c4daf8 65%);
}
.toolbar {
  display: flex;
  align-items: center;
  height: 26px;
  padding-left: 3px;
  border-radius: 3px;
  background: linear-gradient(#deebfd, #c1d8fa 45%, #84a9e8);
  box-shadow: 0 1px #4a6fae;
}
.tb {
  flex: none;
  width: 23px;
  height: 22px;
}
.active {
  border: 1px solid #15246b;
  background: linear-gradient(#fcd09a, #fbb069);
}
.drop {
  flex: none;
  width: 11px;
  height: 22px;
}
.dim {
  opacity: .4;
}
.sep {
  flex: none;
  width: 6px;
  height: 18px;
  background: linear-gradient(90deg, transparent 2px, #6a8ccb 2px 3px, #fff 3px 4px, transparent 4px);
}
.tb-end {
  align-self: stretch;
  align-items: flex-end;
  width: 12px;
  margin-left: 1px;
  padding-bottom: 3px;
  border-radius: 0 3px 3px 0;
  background: linear-gradient(#7ba2e7, #0a3a97);
}
.tb-read {
  gap: 2px;
  height: 22px;
  padding: 0 3px;
}
.fan {
  font-size: 17px;
}
.combo {
  flex: none;
  display: flex;
  height: 22px;
  margin: 0 2px;
  border: 1px solid #fff;
  background: #fff;
}
.combo select {
  flex: 1;
  min-width: 0;
  padding: 0 2px;
  border: none;
  appearance: none;
  background: none;
}
.combo-arrow {
  flex: none;
  display: flex;
  align-items: center;
  justify-content: center;
  width: 12px;
  background: #bcd4f6;
}
.zoom {
  width: 58px;
  font-size: 13px;
}
.style {
  width: 82px;
}
.font {
  width: 123px;
  margin: 0 2px 0 0;
}
.size {
  width: 51px;
  margin: 0;
}
.letter {
  font: bold 15px/16px "Liberation Serif", serif;
}
.italic {
  font-style: italic;
}
.underline {
  text-decoration: underline;
}
.boxed {
  width: 15px;
  border: 1px solid #445c8c;
  line-height: 14px;
}
.shaded {
  width: 15px;
  background: #a9b0bb;
}
.marker {
  font-size: 11px;
}
.marker span {
  width: 17px;
  border-bottom: 4px solid #807d10;
  line-height: 12px;
}
.font-color {
  font: bold 16px/13px "Liberation Serif", serif;
  color: #2a569f;
}
.font-color span {
  width: 16px;
  border-bottom: 4px solid #0a0ae0;
}
.pinyin {
  flex-direction: column;
  font-size: 9px;
  line-height: 9px;
}
.wen {
  font-size: 12px;
  line-height: 12px;
  color: #2453a3;
}

/* work area */
.workspace {
  flex: 1;
  min-height: 0;
  display: grid;
  grid-template: 24px 1fr / 24px 1fr 19px;
  border-left: 1px solid #666d78;
  background: #d8e6fb;
}
.tab-corner {
  padding: 3px 0 0 4px;
}
.tab-mark {
  display: flex;
  width: 16px;
  height: 15px;
  padding: 5px 0 0 5px;
  border: 1px solid #50699a;
}
.tab-mark::after {
  content: "";
  width: 5px;
  height: 5px;
  border-left: 2px solid #50586a;
  border-bottom: 2px solid #50586a;
}
.ruler-h {
  display: flex;
  justify-content: center;
  min-width: 0;
  overflow: hidden;
  padding-left: 4px;
}
.ruler-scale {
  flex: none;
  display: flex;
  height: 20px;
  font: 10px/12px "Liberation Sans", sans-serif;
  background: linear-gradient(90deg, transparent 8px, #a0bcf3 8px 126px, #fff 126px 681px, #a0bcf3 681px 801px, transparent 801px) 0 5px / 100% 12px no-repeat;
}
.ruler-scale span {
  display: flex;
  justify-content: center;
  width: 28px;
  padding-top: 5px;
}
.ruler-scale .zero {
  padding-top: 1px;
}
.ruler-scale .right-indent {
  padding-right: 6px;
}
.right-indent svg {
  margin: 3px -3px 0 0;
}
.ruler-v {
  min-height: 0;
  overflow: hidden;
  width: 13px;
  margin-left: 6px;
  background: linear-gradient(transparent 18px, #a0bcf3 18px 112px, #fff 112px);
}
.ruler-v-scale {
  display: grid;
  grid-template-rows: repeat(13, 1fr);
  height: 537px;
  margin-top: 8px;
  font: 10px/13px "Liberation Sans", sans-serif;
}
.ruler-v-scale span {
  display: flex;
  align-items: center;
  justify-content: space-between;
  padding: 10px 0;
  writing-mode: vertical-rl;
  transform: rotate(180deg);
}
.ruler-v-scale span::before,
.ruler-v-scale span::after {
  content: "";
  width: 5px;
  height: 1px;
  background: #222;
}
.canvas {
  min-width: 0;
  display: flex;
  justify-content: center;
  padding: 15px 0 0 1px;
  background: #9199ae;
}
.page {
  width: 797px;
  padding: 72px 96px 0;
  border: solid #000;
  border-width: 1px 2px 0 1px;
  background: #fff;
}
.crop-marks {
  display: flex;
  justify-content: space-between;
}
.crop-left, .crop-right {
  width: 24px;
  height: 24px;
  border-bottom: 1px solid #999;
}
.crop-left {
  border-right: 1px solid #999;
}
.crop-right {
  border-left: 1px solid #999;
}
.doc-text {
  padding-left: 24px;
  font: 300 48px/62px "Noto Sans CJK SC", sans-serif;
}
.doc-text mark {
  display: inline-block;
  background: #000;
  color: #fff;
}

/* scroll bars */
.scroll-v {
  grid-area: 1 / 3 / 3 / 4;
  display: flex;
  flex-direction: column;
  align-items: center;
  padding-right: 2px;
  background: #f0f0f0;
}
.split {
  width: 17px;
  height: 9px;
  border: 1px solid #fff;
  border-right-color: #666;
  border-bottom-color: #666;
  background: #f0eeec;
}
.scroll-v button {
  width: 17px;
  height: 17px;
}
.scroll-v > button {
  height: 19px;
}
.thumb-v, .thumb-h {
  display: flex;
  align-items: center;
  justify-content: center;
  border: 1px solid #979797;
  border-radius: 2px;
}
.thumb-v {
  width: 15px;
  height: 207px;
  background: linear-gradient(90deg, #f4f4f4, #e3e3e4 50%, #c9cacd);
}
.thumb-v i {
  width: 7px;
  height: 7px;
  background: repeating-linear-gradient(#555 0 1px, transparent 1px 3px);
}
.scroll-nav {
  margin-top: auto;
}
.scroll-h {
  flex: none;
  display: flex;
  align-items: center;
  height: 19px;
  padding-left: 1px;
  border-bottom: 1px solid #fff;
  background: #f0f0f0;
}
.view {
  flex: none;
  width: 17px;
  height: 17px;
}
.thumb-h {
  flex: 1;
  height: 16px;
  margin-left: 2px;
  background: linear-gradient(#f5f5f5, #e3e3e4 50%, #c3c4c8);
}
.thumb-h i {
  width: 8px;
  height: 7px;
  background: repeating-linear-gradient(90deg, #555 0 2px, transparent 2px 3px);
}
.thumb-h + .view {
  width: 38px;
  padding-right: 16px;
}

/* drawing toolbar, cut off by the window edge */
.drawbar {
  flex: none;
  display: flex;
  height: 13px;
  padding: 1px 0 0 3px;
  overflow: hidden;
}
.draw-menu {
  gap: 4px;
  width: 60px;
  height: 22px;
  padding-left: 4px;
}
.draw-menu.auto {
  width: 78px;
}

/* dialog */
.dialog {
  position: absolute;
  top: 206px;
  left: calc(50% - 133px);
  width: 264px;
  padding: 0 6px 6px;
  border: 1px solid #26323f;
  border-radius: 6px;
  background: linear-gradient(100deg, #cfdceb, #abc8e2 40%, #c8dbee 60%, #b4cde6);
  box-shadow: inset 0 0 0 1px #e8f3fc, 1px 3px 9px 2px rgba(0, 0, 0, .65);
  font-family: "Noto Sans CJK SC", sans-serif;
}
.dialog-title {
  display: flex;
  justify-content: space-between;
  height: 28px;
}
.dialog-title h2 {
  padding: 5px 0 0 1px;
  font-size: 12px;
}
.dialog-close {
  width: 47px;
  height: 19px;
  border: 1px solid #5d2a26;
  border-top: none;
  border-radius: 0 0 4px 4px;
  background: linear-gradient(#e3a196, #cf6b5b 45%, #b83523 50%, #d06a4f);
}
.dialog-body {
  padding: 4px 7px 6px 5px;
  border: 1px solid #6f8aa8;
  background: #f0f0f0;
}
.group {
  display: flex;
  align-items: center;
  gap: 12px;
  font-size: 12px;
}
.group::after {
  content: "";
  flex: 1;
  border-top: 1px solid #d8d8d8;
}
.styles {
  display: grid;
  grid-template-columns: 77px 76px 1fr;
  padding: 6px 0 10px 10px;
}
.choice input {
  position: absolute;
  opacity: 0;
}
.choice label {
  display: block;
  width: 54px;
  height: 51px;
  background: #fff;
  outline: 1px solid #8a8a8a;
  outline-offset: -1px;
}
.choice input:checked + label {
  border: 2px dotted #222;
  box-shadow: inset 0 0 0 3px #3d93dd;
}
.choice input:checked + label svg {
  margin: -2px;
}
.caption {
  display: block;
  margin-top: 3px;
  white-space: nowrap;
}
.caption.none {
  padding-left: 11px;
}
.key {
  font: 10px/12px "Liberation Mono", monospace;
}
.num-large {
  font: 34px "Liberation Serif", serif;
  text-anchor: middle;
}
.num-small {
  font: bold 20px "Liberation Serif", serif;
  text-anchor: middle;
}
.lists {
  display: flex;
  justify-content: space-between;
  padding: 3px 0 0 10px;
}
.field {
  width: 90px;
}
.field label, .field-label {
  display: block;
  margin-left: -1px;
  line-height: 12px;
}
.field input {
  display: block;
  width: 100%;
  height: 19px;
  padding: 0 2px;
  border: 1px solid #999;
}
.char-list {
  display: flex;
  justify-content: space-between;
  height: 51px;
  border: 1px solid #8a8a8a;
  background: #fff;
}
.char-list ul {
  padding: 1px 3px;
  font: 10px/12px "Liberation Mono", monospace;
}
.mini-scroll {
  display: flex;
  flex-direction: column;
  align-items: center;
  justify-content: space-between;
  width: 17px;
  padding: 7px 0;
  background: #f0f0f0;
}
.ring-list {
  height: 64px;
  padding: 1px;
  border: 1px solid #8a8a8a;
  background: #fff;
  color: #000;
  font: 13px/15px "DejaVu Sans", sans-serif;
}
.ring-list .selected {
  background: #3399ff;
  color: #fff;
}
.actions {
  display: flex;
  justify-content: flex-end;
  gap: 9px;
  margin-top: 17px;
}
.btn {
  width: 72px;
  height: 19px;
  border: 1px solid #777;
  border-radius: 3px;
  background: linear-gradient(#f3f3f3, #ebebeb 50%, #d4d4d4);
}
.btn.primary {
  border-color: #2d87b0;
  box-shadow: inset 0 0 0 1px #52cdf2;
}

/* overlays */
.pointer {
  position: absolute;
  top: 294px;
  left: calc(50% + 100px);
  fill: none;
}
.watermark {
  position: absolute;
  right: 71px;
  bottom: 29px;
  fill: #fff;
  opacity: .75;
  filter: drop-shadow(0 0 1px rgba(80, 90, 110, .6));
}
.wm-bai {
  font: bold 54px "Liberation Sans", sans-serif;
}
.wm-du {
  font: bold 34px "Liberation Sans", sans-serif;
  fill: #8089a0;
}
.wm-cn {
  font: bold 40px "Noto Sans CJK SC", sans-serif;
}
.wm-url {
  font: 29px "Open Sans", sans-serif;
}
```
